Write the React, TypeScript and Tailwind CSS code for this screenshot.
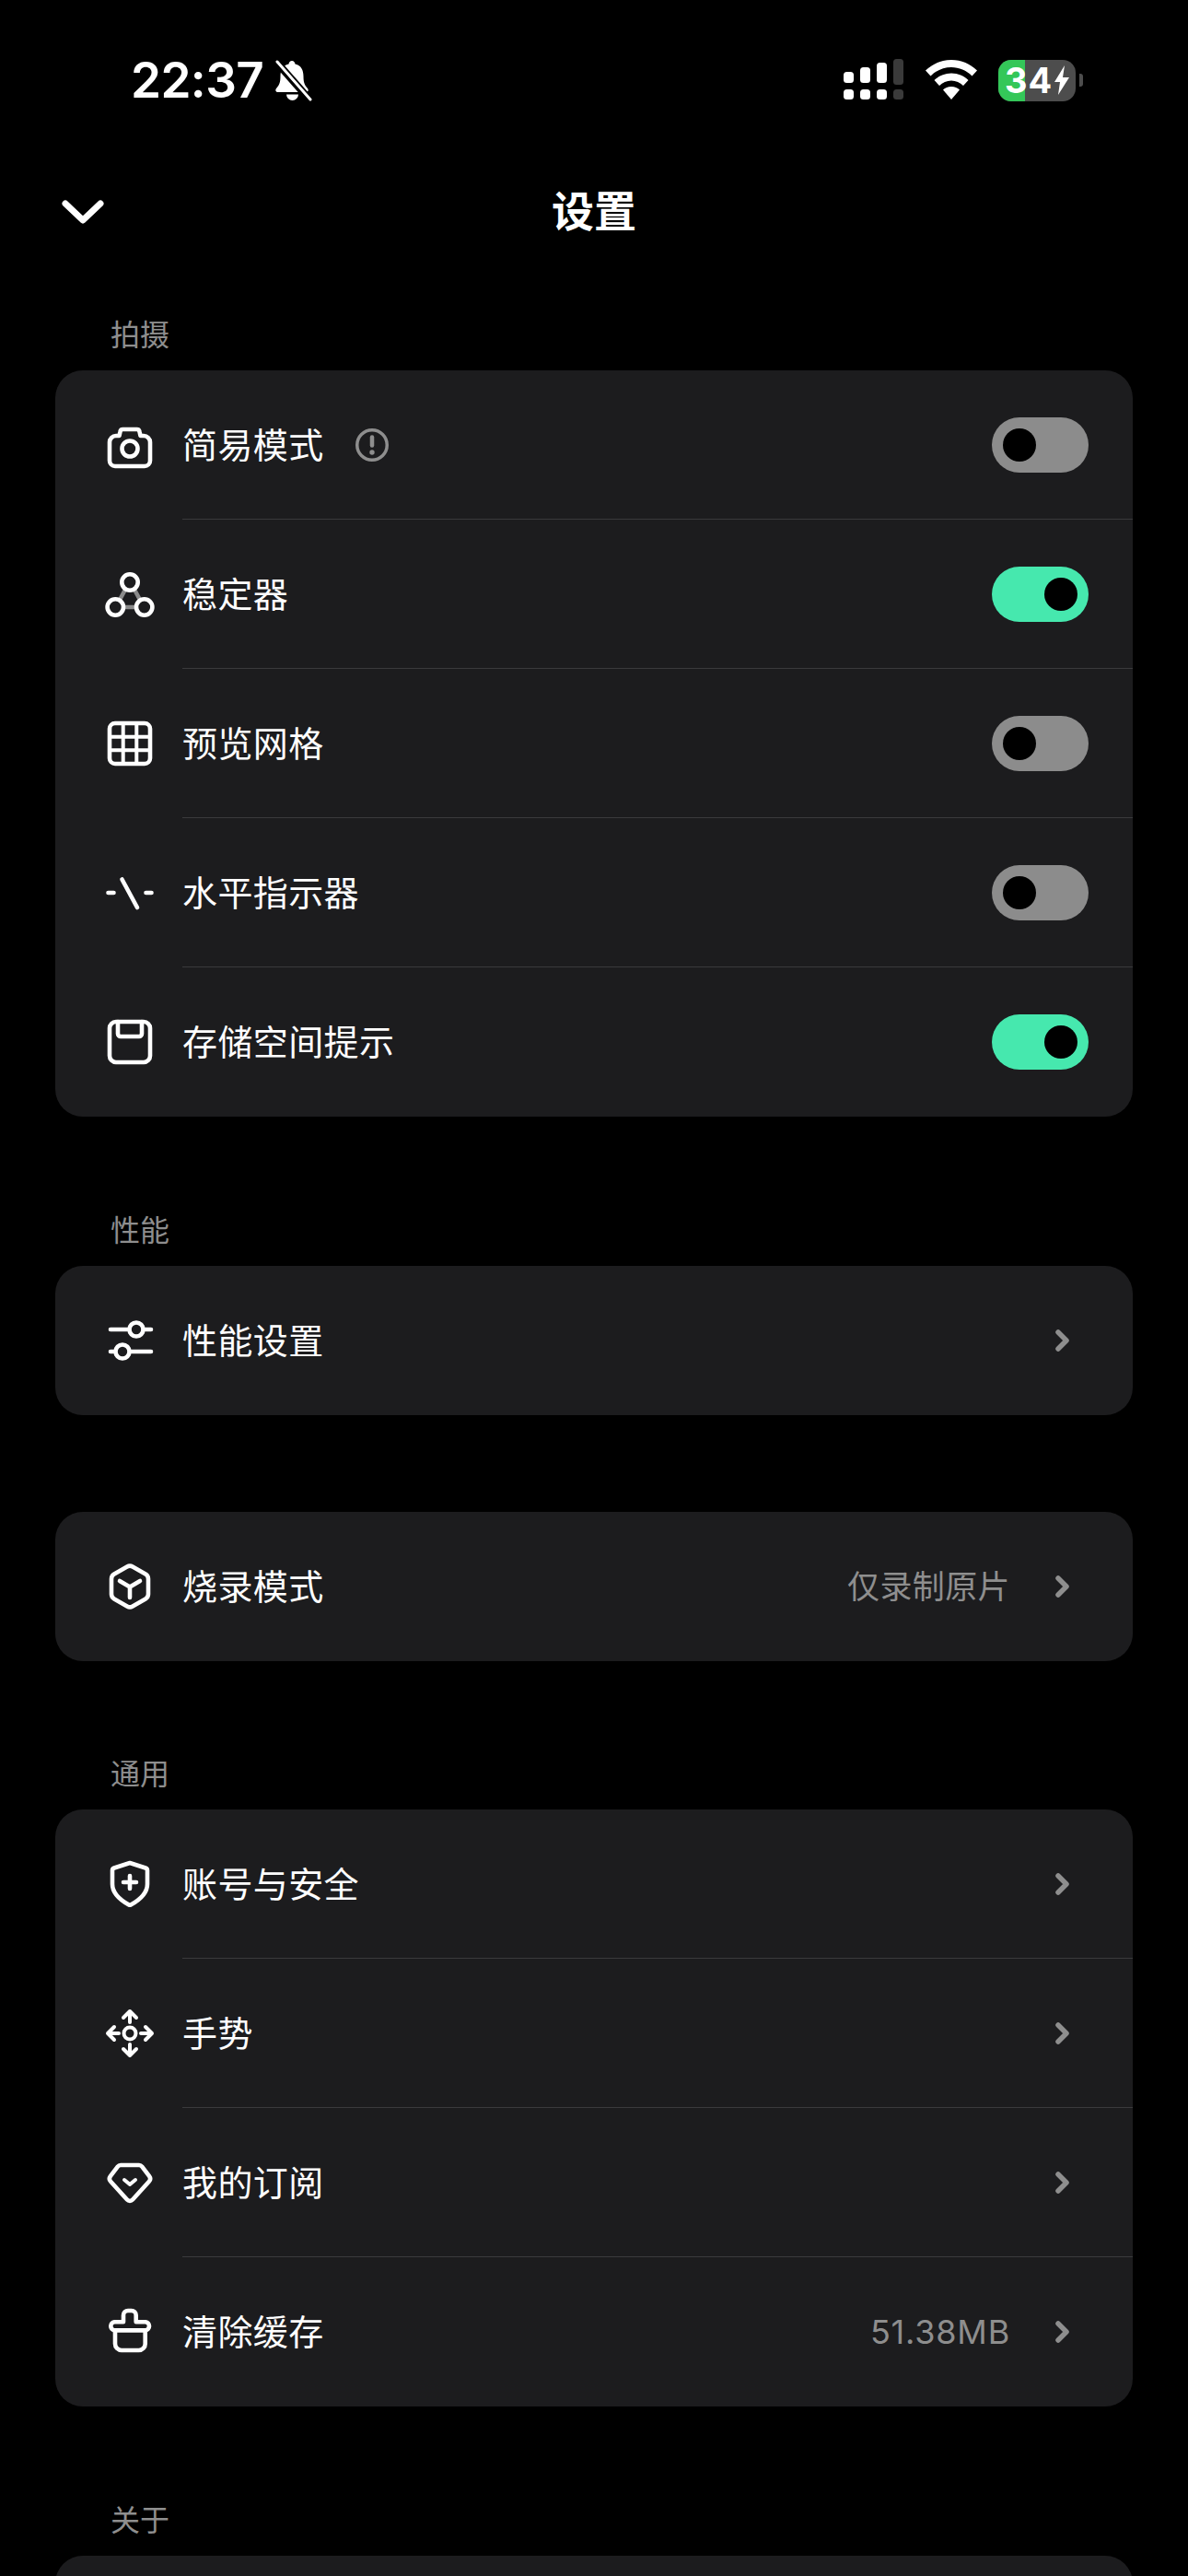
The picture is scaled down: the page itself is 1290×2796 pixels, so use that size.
import React from "react";

const CJK = "font-['Inter','Noto_Sans_CJK_SC',sans-serif]";

function Svg({ children }: { children: React.ReactNode }) {
  return (
    <svg
      viewBox="0 0 54 54"
      className="w-[54px] h-[54px] shrink-0"
      fill="none"
      stroke="#fff"
      strokeWidth="4.6"
      strokeLinecap="round"
      strokeLinejoin="round"
    >
      {children}
    </svg>
  );
}

const CameraIcon = () => (
  <Svg>
    <path d="M5 24a7 7 0 0 1 7-7h3.500l1-4.500a3 3 0 0 1 3-2.500h15a3 3 0 0 1 3 2.500l1 4.500H42a7 7 0 0 1 7 7v20a6 6 0 0 1-6 6H11a6 6 0 0 1-6-6z" />
    <circle cx="27" cy="31" r="8.500" />
  </Svg>
);

const StabilizerIcon = () => (
  <Svg>
    <path d="M22 22 16 33M32 22 38 33M20 41h14" stroke="#8a8a8a" strokeLinecap="butt" />
    <circle cx="27" cy="14" r="8.700" />
    <circle cx="11.300" cy="41" r="8.700" />
    <circle cx="42.700" cy="41" r="8.700" />
  </Svg>
);

const GridIcon = () => (
  <Svg>
    <rect x="5" y="5" width="44" height="44" rx="6" />
    <path d="M19.700 5v44M34.300 5v44M5 19.700h44M5 34.300h44" strokeWidth="4" strokeLinecap="butt" />
  </Svg>
);

const LevelIcon = () => (
  <Svg>
    <path d="M3.500 27h6M44.500 27h6M18.500 12.500 35 43" />
  </Svg>
);

const StorageIcon = () => (
  <Svg>
    <rect x="5" y="5" width="44" height="44" rx="7" />
    <path d="M14 5v13a3 3 0 0 0 3 3h20a3 3 0 0 0 3-3V5" />
  </Svg>
);

const SlidersIcon = () => (
  <Svg>
    <path d="M6 15h20M42 15h8M6 39h5M27 39h23" />
    <circle cx="34" cy="15" r="7.500" />
    <circle cx="19" cy="39" r="7.500" />
  </Svg>
);

const CubeIcon = () => (
  <Svg>
    <path d="M24 5.500a6 6 0 0 1 6 0l14 8a6 6 0 0 1 3 5.200v16.600a6 6 0 0 1-3 5.200l-14 8a6 6 0 0 1-6 0l-14-8a6 6 0 0 1-3-5.200V18.700a6 6 0 0 1 3-5.200z" />
    <path d="M16 21l11 6.500L38 21M27 27.500V39" />
  </Svg>
);

const ShieldIcon = () => (
  <Svg>
    <path d="M27 4 44 9.500a3 3 0 0 1 2 3V27c0 9-8 17-18 22.500a2 2 0 0 1-2 0C16 44 8 36 8 27V12.500a3 3 0 0 1 2-3z" />
    <path d="M27 18v14M20 25h14" />
  </Svg>
);

const GestureIcon = () => (
  <Svg>
    <circle cx="27" cy="27" r="6.500" strokeWidth="4" />
    <path
      d="M27 3v12M20 10l7-7 7 7M27 51V39M20 44l7 7 7-7M3 27h12M10 20l-7 7 7 7M51 27H39M44 20l7 7-7 7"
      strokeWidth="4"
    />
  </Svg>
);

const GemIcon = () => (
  <Svg>
    <path d="M17 8h20a4 4 0 0 1 3.200 1.600l8 10.500a4.500 4.500 0 0 1-.3 5.700L30 45.500a4 4 0 0 1-6 0L6.100 25.800a4.500 4.500 0 0 1-.3-5.700l8-10.500A4 4 0 0 1 17 8z" />
    <path d="M21 24l6 5 6-5" strokeWidth="4" />
  </Svg>
);

const BasketIcon = () => (
  <Svg>
    <path d="M20 16.300V9a5 5 0 0 1 5-5h3.700a5 5 0 0 1 5 5v7.300h10.400a4.600 4.600 0 0 1 0 9.100H10.200a4.600 4.600 0 0 1 0-9.100z" />
    <path d="M11 25.400V40a7 7 0 0 0 7 7h18.700a7 7 0 0 0 7-7V25.400" />
  </Svg>
);

function InfoIcon() {
  return (
    <svg viewBox="0 0 36 36" className="w-[36px] h-[36px] ml-[34px]" fill="none">
      <circle cx="18" cy="18" r="16.250" stroke="#8e8e8e" strokeWidth="3.500" />
      <path d="M18 9.500v9" stroke="#8e8e8e" strokeWidth="4.500" strokeLinecap="round" />
      <circle cx="18" cy="26" r="2.700" fill="#8e8e8e" />
    </svg>
  );
}

function Toggle({ on }: { on: boolean }) {
  return (
    <div
      className={
        on
          ? "w-[105px] h-[60px] rounded-full bg-[#46e8ae] flex items-center justify-end px-[12px]"
          : "w-[105px] h-[60px] rounded-full bg-[#8c8c8c] flex items-center justify-start px-[12px]"
      }
    >
      <div className="w-[36px] h-[36px] rounded-full bg-black" />
    </div>
  );
}

function Chevron() {
  return (
    <svg viewBox="0 0 18 26" className="w-[18px] h-[26px] ml-[48px] mr-[19px]" fill="none">
      <path d="M4 4l9 9-9 9" stroke="#8e8e8e" strokeWidth="5.500" strokeLinecap="round" strokeLinejoin="round" />
    </svg>
  );
}

type RowProps = {
  icon: React.ReactNode;
  label: string;
  info?: boolean;
  toggle?: boolean;
  value?: React.ReactNode;
  last?: boolean;
};

function Row({ icon, label, info, toggle, value, last }: RowProps) {
  return (
    <div className="flex h-[162px] pl-[54px]">
      <div className="flex items-center mr-[30px]">{icon}</div>
      <div className={last ? "flex-1 flex items-center pr-[48px]" : "flex-1 flex items-center pr-[48px] border-b border-[#3a3a3c]"}>
        <span className="text-[38px] leading-none tracking-[0.4px] text-white">{label}</span>
        {info && <InfoIcon />}
        <div className="flex-1" />
        {value}
        {toggle === undefined ? <Chevron /> : <Toggle on={toggle} />}
      </div>
    </div>
  );
}

function Card({ children }: { children: React.ReactNode }) {
  return <div className="mx-[60px] rounded-[30px] bg-[#1c1c1e] overflow-hidden">{children}</div>;
}

function SectionLabel({ children }: { children: React.ReactNode }) {
  return <div className="h-[44px] mb-[16px] pl-[120px] text-[32px] leading-[44px] text-[#8e8e8e]">{children}</div>;
}

function StatusBar() {
  return (
    <div className="h-[174px] flex items-center pl-[142px] pr-[114px]">
      <span className="text-[53px] leading-none font-semibold text-white tracking-[-0.6px]">22:37</span>
      {/* muted bell */}
      <svg viewBox="0 0 44 46" className="w-[44px] h-[46px] ml-[10px]" fill="none">
        <path
          d="M21 2c-2 0-3 1.500-3.500 3.500C11 7 8.500 12 8.500 19c0 6-1 9-4.500 13-1.500 2-.5 4 2 4h30c2.500 0 3.500-2 2-4-3.500-4-4.500-7-4.500-13 0-7-2.500-12-9-13.500C24 3.500 23 2 21 2z"
          fill="#fff"
        />
        <path d="M15 38.500a6.500 6.500 0 0 0 13 0z" fill="#fff" />
        <path d="M4 3l36 41" stroke="#000" strokeWidth="8" />
        <path d="M5 3l36 41" stroke="#fff" strokeWidth="3" strokeLinecap="round" />
      </svg>
      <div className="flex-1" />
      {/* signal */}
      <svg viewBox="0 0 66 46" className="w-[66px] h-[46px] mr-[22px]">
        <rect x="0" y="14" width="11" height="12" rx="3.500" fill="#fff" />
        <rect x="18" y="9" width="11" height="17" rx="3.500" fill="#fff" />
        <rect x="36" y="4" width="11" height="22" rx="3.500" fill="#fff" />
        <rect x="54" y="0" width="11" height="28" rx="3.500" fill="#3a3a3a" />
        <rect x="0" y="33" width="11" height="11" rx="3.500" fill="#fff" />
        <rect x="18" y="33" width="11" height="11" rx="3.500" fill="#fff" />
        <rect x="36" y="33" width="11" height="11" rx="3.500" fill="#fff" />
        <rect x="54" y="33" width="11" height="11" rx="3.500" fill="#3a3a3a" />
      </svg>
      {/* wifi */}
      <svg viewBox="0 0 58 44" className="w-[58px] h-[44px] mr-[22px]">
        <path d="M29 0C18 0 8.500 4.300 1 11.500l5.500 6C12.500 11.500 20.500 8 29 8s16.500 3.500 22.500 9.500l5.500-6C49.500 4.300 40 0 29 0z" fill="#fff" />
        <path d="M29 14.500c-7.500 0-13.500 2.800-18.500 7.500l5.500 6c3.500-3.300 8-5.500 13-5.500s9.500 2.200 13 5.500l5.500-6c-5-4.700-11-7.500-18.500-7.500z" fill="#fff" />
        <path d="M29 29c-4 0-6.500 1.200-9 3.500L29 43l9-10.500c-2.500-2.300-5-3.500-9-3.500z" fill="#fff" />
      </svg>
      {/* battery */}
      <div className="relative w-[84px] h-[45px] rounded-[14px] bg-[#4d4d4d] overflow-hidden flex items-center pl-[7px]">
        <div className="absolute left-0 top-0 bottom-0 w-[29px] bg-[#34c759]" />
        <span className="relative text-[38px] leading-none font-bold text-white tracking-[1px]">34</span>
        <svg viewBox="0 0 18 32" className="relative w-[18px] h-[32px] ml-[1px] shrink-0">
          <path d="M12 0 1 18h6L5 32 17 13h-7z" fill="#fff" />
        </svg>
      </div>
      <div className="w-[4px] h-[14px] ml-[4px] rounded-r-[3px] bg-[#4d4d4d]" />
    </div>
  );
}

function NavBar() {
  return (
    <div className="relative h-[110px] flex items-center justify-center">
      <svg viewBox="0 0 48 30" className="absolute left-[66px] top-[41px] w-[48px] h-[30px]" fill="none">
        <path d="M5 6l19 18L43 6" stroke="#fff" strokeWidth="7" strokeLinecap="round" strokeLinejoin="round" />
      </svg>
      <span className="text-[46px] leading-none font-bold text-white">设置</span>
    </div>
  );
}

export default function App() {
  return (
    <div className={`w-[1290px] h-[2796px] overflow-hidden bg-black ${CJK}`}>
      <StatusBar />
      <NavBar />

      <div className="h-[58px]" />
      <SectionLabel>拍摄</SectionLabel>
      <Card>
        <Row icon={<CameraIcon />} label="简易模式" info toggle={false} />
        <Row icon={<StabilizerIcon />} label="稳定器" toggle={true} />
        <Row icon={<GridIcon />} label="预览网格" toggle={false} />
        <Row icon={<LevelIcon />} label="水平指示器" toggle={false} />
        <Row icon={<StorageIcon />} label="存储空间提示" toggle={true} last />
      </Card>

      <div className="h-[102px]" />
      <SectionLabel>性能</SectionLabel>
      <Card>
        <Row icon={<SlidersIcon />} label="性能设置" last />
      </Card>

      <div className="h-[105px]" />
      <Card>
        <Row
          icon={<CubeIcon />}
          label="烧录模式"
          value={<span className="text-[35px] leading-none tracking-[0.4px] text-[#8e8e8e]">仅录制原片</span>}
          last
        />
      </Card>

      <div className="h-[101px]" />
      <SectionLabel>通用</SectionLabel>
      <Card>
        <Row icon={<ShieldIcon />} label="账号与安全" />
        <Row icon={<GestureIcon />} label="手势" />
        <Row icon={<GemIcon />} label="我的订阅" />
        <Row
          icon={<BasketIcon />}
          label="清除缓存"
          value={<span className="text-[36px] leading-none tracking-[0.8px] text-[#8e8e8e]">51.38MB</span>}
          last
        />
      </Card>

      <div className="h-[102px]" />
      <SectionLabel>关于</SectionLabel>
      <Card>
        <div className="h-[162px]" />
      </Card>
    </div>
  );
}
